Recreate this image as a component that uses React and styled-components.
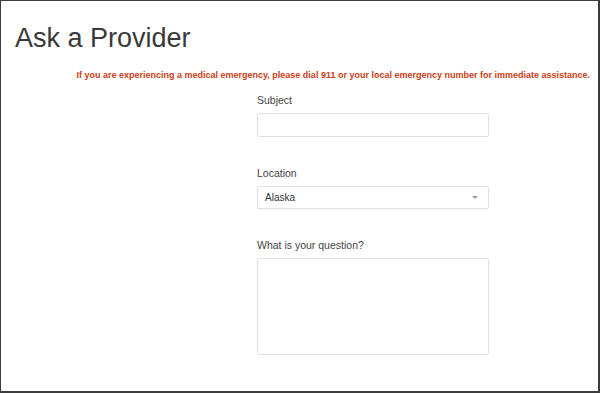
import styled, { createGlobalStyle } from 'styled-components';

const GlobalStyle = createGlobalStyle`
  html, body {
    margin: 0;
    padding: 0;
    background: #fff;
  }
  body {
    font-family: "Liberation Sans", Arial, sans-serif;
    color: #333;
  }
`;

const Frame = styled.div`
  box-sizing: border-box;
  width: 600px;
  height: 393px;
  border-style: solid;
  border-color: #3c3c3c;
  border-width: 1px 2px 2px 1px;
  overflow: hidden;
  padding: 0 8px 0 14px;
`;

const Title = styled.h1`
  margin: 21px 0 0;
  font-size: 27px;
  font-weight: 400;
  line-height: 32px;
  color: #3a3a3a;
`;

const Warning = styled.p`
  margin: 15px 0 0;
  text-align: right;
  font-size: 9px;
  font-weight: 700;
  color: #cc3d16;
  line-height: 12px;
`;

const Form = styled.form`
  display: flex;
  flex-direction: column;
  width: 232px;
  margin: 13px 0 0 242px;
  gap: 30px;
`;

const Field = styled.div`
  display: flex;
  flex-direction: column;
`;

const Label = styled.label`
  font-size: 10.5px;
  line-height: 13px;
  color: #444;
  margin-bottom: 6px;
`;

const controlBase = `
  box-sizing: border-box;
  width: 232px;
  border: 1px solid #dfe1e4;
  border-radius: 2px;
  background: #fff;
  font-family: "Liberation Sans", Arial, sans-serif;
  font-size: 10px;
  color: #333;
  outline: none;
`;

const TextInput = styled.input`
  ${controlBase}
  height: 24px;
  padding: 0 7px;
`;

const SelectBox = styled.div`
  ${controlBase}
  height: 23px;
  display: flex;
  align-items: center;
  padding: 0 7px;
  box-shadow: 0 1px 1px rgba(0, 0, 0, 0.04);
`;

const Caret = styled.span`
  margin-left: auto;
  margin-right: 3px;
  width: 0;
  height: 0;
  border-left: 3.5px solid transparent;
  border-right: 3.5px solid transparent;
  border-top: 3.5px solid #999;
`;

const TextArea = styled.textarea`
  ${controlBase}
  display: block;
  height: 97px;
  padding: 6px 7px;
  resize: none;
`;

export default function App() {
  return (
    <>
      <GlobalStyle />
      <Frame>
        <Title>Ask a Provider</Title>
        <Warning>
          If you are experiencing a medical emergency, please dial 911 or your local emergency
          number for immediate assistance.
        </Warning>
        <Form>
          <Field>
            <Label htmlFor="subject">Subject</Label>
            <TextInput id="subject" type="text" />
          </Field>
          <Field>
            <Label>Location</Label>
            <SelectBox>
              Alaska
              <Caret />
            </SelectBox>
          </Field>
          <Field>
            <Label htmlFor="question">What is your question?</Label>
            <TextArea id="question" />
          </Field>
        </Form>
      </Frame>
    </>
  );
}
